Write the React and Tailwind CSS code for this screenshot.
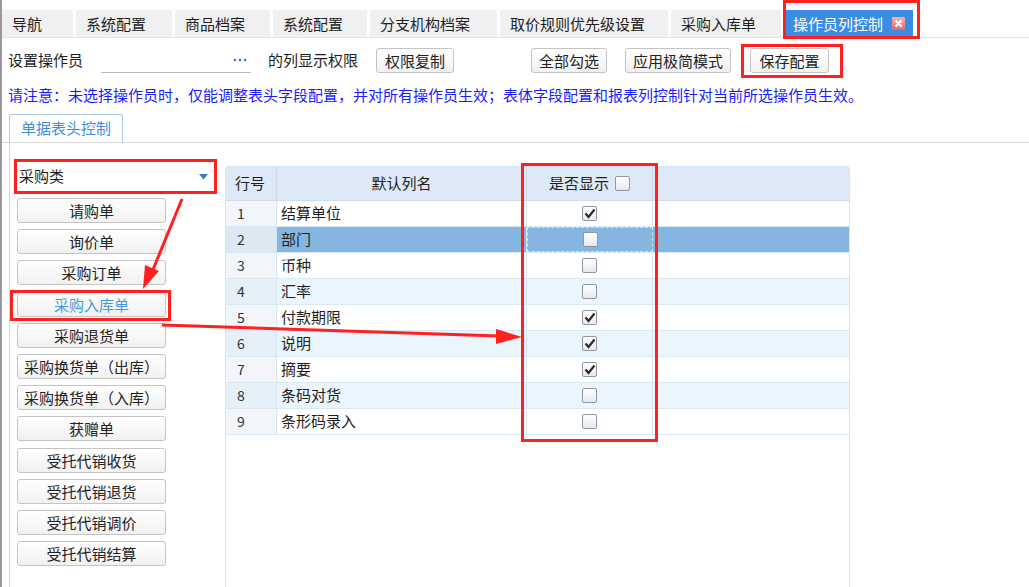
import React from "react";

const F = { fontFamily: '"Noto Sans CJK SC", "Noto Sans", sans-serif' };

function Check({ checked }) {
  return (
    <span className="inline-flex h-[15px] w-[15px] items-center justify-center rounded-[2px] border border-[#8d98a3] bg-gradient-to-b from-white to-[#e6e9ec]">
      {checked && (
        <svg width="12" height="11" viewBox="0 0 12 11">
          <path d="M1.5 5.5 L4.5 9 L10.5 1.5" fill="none" stroke="#2a2a2a" strokeWidth="2.2" strokeLinejoin="miter" />
        </svg>
      )}
    </span>
  );
}

const tabs = [
  ["导航", 71],
  ["系统配置", 96],
  ["商品档案", 95],
  ["系统配置", 94],
  ["分支机构档案", 127],
  ["取价规则优先级设置", 168],
  ["采购入库单", 110],
];

const docs = [
  "请购单",
  "询价单",
  "采购订单",
  "采购入库单",
  "采购退货单",
  "采购换货单（出库）",
  "采购换货单（入库）",
  "获赠单",
  "受托代销收货",
  "受托代销退货",
  "受托代销调价",
  "受托代销结算",
];

const rows = [
  ["结算单位", true],
  ["部门", false],
  ["币种", false],
  ["汇率", false],
  ["付款期限", true],
  ["说明", true],
  ["摘要", true],
  ["条码对货", false],
  ["条形码录入", false],
];

function Btn({ children, className = "" }) {
  return (
    <button className={"h-[25px] whitespace-nowrap rounded-[3px] border border-[#c4c4c4] bg-gradient-to-b from-white to-[#f1f1f1] px-0 text-[15px] leading-none text-[#222] " + className}>
      {children}
    </button>
  );
}

export default function App() {
  return (
    <div className="relative h-[587px] w-[1029px] overflow-hidden border-l-2 border-[#9a9a9a] bg-white text-[#1e1e1e]" style={F}>
      {/* tab bar */}
      <div className="flex h-[38px] items-end gap-[3px] border-b border-[#e3e3e3]">
        {tabs.map(([t, w], i) => (
          <div key={i} className="flex h-[27px] items-center bg-[#f0f0f0] pl-[10px] text-[15px] leading-none" style={{ width: w }}>
            {t}
          </div>
        ))}
        <div className="ml-[1px] flex h-[27px] w-[128px] items-center gap-[9px] bg-[#3a8de2] pl-[8px] text-[15px] leading-none text-white">
          操作员列控制
          <span className="flex h-[13px] w-[13px] items-center justify-center rounded-[1px] bg-gradient-to-b from-[#f7b0b0] to-[#e06b6b]">
            <svg width="9" height="9" viewBox="0 0 9 9">
              <path d="M1.5 1.5 L7.5 7.5 M7.5 1.5 L1.5 7.5" stroke="white" strokeWidth="2" />
            </svg>
          </span>
        </div>
      </div>

      {/* operator row */}
      <div className="flex h-[44px] items-center pl-[6px] text-[15px]">
        <span className="w-[93px]">设置操作员</span>
        <div className="flex h-[26px] w-[150px] items-center justify-end border-b border-[#bdbdbd] pr-[4px]">
          <svg width="14" height="4" viewBox="0 0 14 4">
            <circle cx="2" cy="2" r="1.3" fill="#3a7bd5" />
            <circle cx="7" cy="2" r="1.3" fill="#3a7bd5" />
            <circle cx="12" cy="2" r="1.3" fill="#3a7bd5" />
          </svg>
        </div>
        <span className="ml-[17px] w-[108px]">的列显示权限</span>
        <Btn className="w-[78px]">权限复制</Btn>
        <Btn className="ml-[77px] w-[76px]">全部勾选</Btn>
        <Btn className="ml-[18px] w-[106px]">应用极简模式</Btn>
        <Btn className="ml-[19px] w-[79px]">保存配置</Btn>
      </div>

      {/* notice */}
      <div className="pl-[6px] pt-[3px] text-[15px] leading-[20px] text-[#1b1bff]">
        请注意：未选择操作员时，仅能调整表头字段配置，并对所有操作员生效；表体字段配置和报表列控制针对当前所选操作员生效。
      </div>

      {/* sub tab */}
      <div className="mt-[9px] flex h-[29px] items-end border-b border-[#d7d7d7] pl-[7px]">
        <div className="flex h-[28px] w-[114px] items-center justify-center rounded-t-[3px] border border-b-0 border-[#a9cbe8] bg-white text-[15px] text-[#3d8fe0]">
          单据表头控制
        </div>
      </div>

      {/* content */}
      <div className="ml-[7px] flex h-[460px] border-l border-[#d5d5d5]">
        {/* left */}
        <div className="w-[215px] pl-[4px] pt-[16px]">
          <div className="flex h-[35px] w-[203px] items-center justify-between border-[3px] border-[#ff2020] bg-white pl-[2px] pr-[6px] text-[15px]">
            采购类
            <svg width="9" height="6" viewBox="0 0 9 6">
              <path d="M0 0 L9 0 L4.5 5.5 Z" fill="#3a78c9" />
            </svg>
          </div>
          <div className="mt-[4px] flex flex-col gap-[6.2px] pl-[3px]">
            {docs.map((d, i) => (
              <Btn key={i} className={"w-[149px] " + (i === 3 ? "!text-[#3f9be0]" : "")}>
                {d}
              </Btn>
            ))}
          </div>
        </div>

        {/* table */}
        <div className="mt-[23px] h-[440px] w-[625px] rounded-t-[3px] border border-[#d4e6f6] text-[15px]">
          <div className="flex h-[34px] border-b border-[#cfdbe6] bg-[#dde9f6]">
            <div className="flex w-[51px] items-center border-r border-[#cbd9e6] pl-[9px]">行号</div>
            <div className="flex w-[250px] items-center justify-center border-r border-[#cbd9e6]">默认列名</div>
            <div className="flex w-[126px] items-center justify-center gap-[6px] border-r border-[#cbd9e6]">
              是否显示 <Check />
            </div>
            <div className="flex-1" />
          </div>
          {rows.map(([name, c], i) => {
            const sel = i === 1;
            const alt = i % 2 === 1;
            const bg = sel ? "bg-[#85b6e0]" : alt ? "bg-[#ebf5fe]" : "bg-white";
            return (
              <div key={i} className={"flex h-[26px] border-b border-[#d9e8f5] " + bg}>
                <div className={"flex w-[51px] items-center border-r border-[#d6e5f2] pl-[11px] text-[14px] text-[#333] " + (sel ? "bg-[#dce9f3]" : alt ? "bg-[#e6f0f8]" : "bg-[#f2f6fa]")}>
                  {i + 1}
                </div>
                <div className="flex w-[250px] items-center border-r border-[#d6e5f2] pl-[4px]">{name}</div>
                <div className={"flex w-[126px] items-center justify-center border-r border-[#d6e5f2] " + (sel ? "border border-dashed border-[#c8dcec]" : "")}>
                  <Check checked={c} />
                </div>
                <div className="flex-1" />
              </div>
            );
          })}
        </div>
      </div>

      {/* annotations */}
      <div className="pointer-events-none absolute left-[781px] top-0 h-[39px] w-[137px] border-[3px] border-[#ff2020]" />
      <div className="pointer-events-none absolute left-[739px] top-[44px] h-[34px] w-[102px] border-[3px] border-[#ff2020]" />
      <div className="pointer-events-none absolute left-[8px] top-[290px] h-[31px] w-[161px] border-[3px] border-[#ff2020]" />
      <div className="pointer-events-none absolute left-[519px] top-[163px] h-[279px] w-[137px] border-[3px] border-[#ff2020]" />
      <svg className="pointer-events-none absolute left-0 top-0" width="1029" height="587">
        <line x1="180" y1="199" x2="150" y2="272" stroke="#ff2020" strokeWidth="3" />
        <path d="M141 289 L143 265 L157 271 Z" fill="#ff2020" />
        <line x1="160" y1="325" x2="497" y2="336" stroke="#ff2020" strokeWidth="3" />
        <path d="M520 337 L494 329 L494 344 Z" fill="#ff2020" />
      </svg>
    </div>
  );
}
